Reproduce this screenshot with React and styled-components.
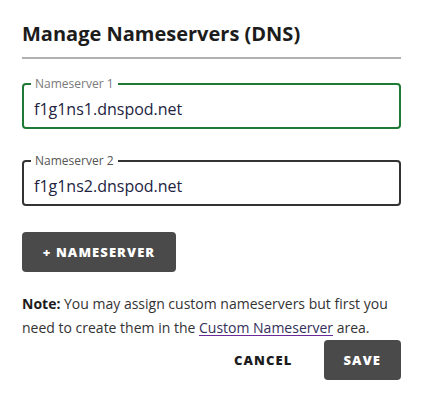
import React from "react";
import styled, { createGlobalStyle } from "styled-components";

const Global = createGlobalStyle`
  html, body { margin: 0; padding: 0; background: #fff; }
  body { font-family: "Open Sans", "Noto Sans", sans-serif; }
  * { box-sizing: border-box; }
`;

const Dialog = styled.div`
  width: 422px;
  padding: 20px 21px 0 22px;
  display: flex;
  flex-direction: column;
`;

const Title = styled.h2`
  margin: 0;
  font-size: 20px;
  line-height: 28px;
  font-weight: 700;
  color: #1c1c1c;
  padding-bottom: 9px;
  border-bottom: 2px solid #b0b0b0;
`;

const Fields = styled.div`
  display: flex;
  flex-direction: column;
  gap: 31px;
  margin-top: 24px;
`;

const Field = styled.div`
  position: relative;
  height: 46px;
  border: 2px solid ${(p) => (p.$focused ? "#1f7a35" : "#333")};
  border-radius: 4px;
  display: flex;
  align-items: center;
  padding: 6px 10px 0 10px;
`;

const FloatLabel = styled.span`
  position: absolute;
  top: -8px;
  left: 7px;
  padding: 0 4px;
  background: #fff;
  font-size: 12px;
  line-height: 13px;
  color: ${(p) => (p.$focused ? "#7a7a7a" : "#555")};
`;

const Value = styled.input`
  border: none;
  outline: none;
  padding: 0;
  width: 100%;
  font-family: inherit;
  font-size: 16px;
  line-height: 22px;
  color: #23233f;
  background: transparent;
`;

const Button = styled.button`
  font-family: inherit;
  font-weight: 800;
  font-size: 13px;
  letter-spacing: 1.1px;
  height: 40px;
  border-radius: 4px;
  border: none;
  cursor: pointer;
  text-transform: uppercase;
  padding: 0 20px;
  background: ${(p) => (p.$variant === "text" ? "transparent" : "#4a4a4a")};
  color: ${(p) => (p.$variant === "text" ? "#1c1c1c" : "#fff")};
`;

const AddButton = styled(Button)`
  align-self: flex-start;
  width: 154px;
  margin-top: 26px;
  padding: 0;
`;

const Note = styled.p`
  margin: 20px 0 0 0;
  font-size: 14px;
  line-height: 24px;
  color: #333;
  strong { color: #1c1c1c; font-weight: 700; }
`;

const Link = styled.a`
  color: #33305a;
  text-decoration: underline;
  text-decoration-color: #6a2a9a;
  text-underline-offset: 2px;
`;

const Actions = styled.div`
  display: flex;
  justify-content: flex-end;
  gap: 11px;
`;

export default function App() {
  return (
    <>
      <Global />
      <Dialog>
        <Title>Manage Nameservers (DNS)</Title>
        <Fields>
          <Field $focused>
            <FloatLabel $focused>Nameserver 1</FloatLabel>
            <Value defaultValue="f1g1ns1.dnspod.net" />
          </Field>
          <Field>
            <FloatLabel>Nameserver 2</FloatLabel>
            <Value defaultValue="f1g1ns2.dnspod.net" />
          </Field>
        </Fields>
        <AddButton>+ Nameserver</AddButton>
        <Note>
          <strong>Note:</strong> You may assign custom nameservers but first you
          need to create them in the <Link href="#">Custom Nameserver</Link> area.
        </Note>
        <Actions>
          <Button $variant="text">Cancel</Button>
          <Button>Save</Button>
        </Actions>
      </Dialog>
    </>
  );
}
